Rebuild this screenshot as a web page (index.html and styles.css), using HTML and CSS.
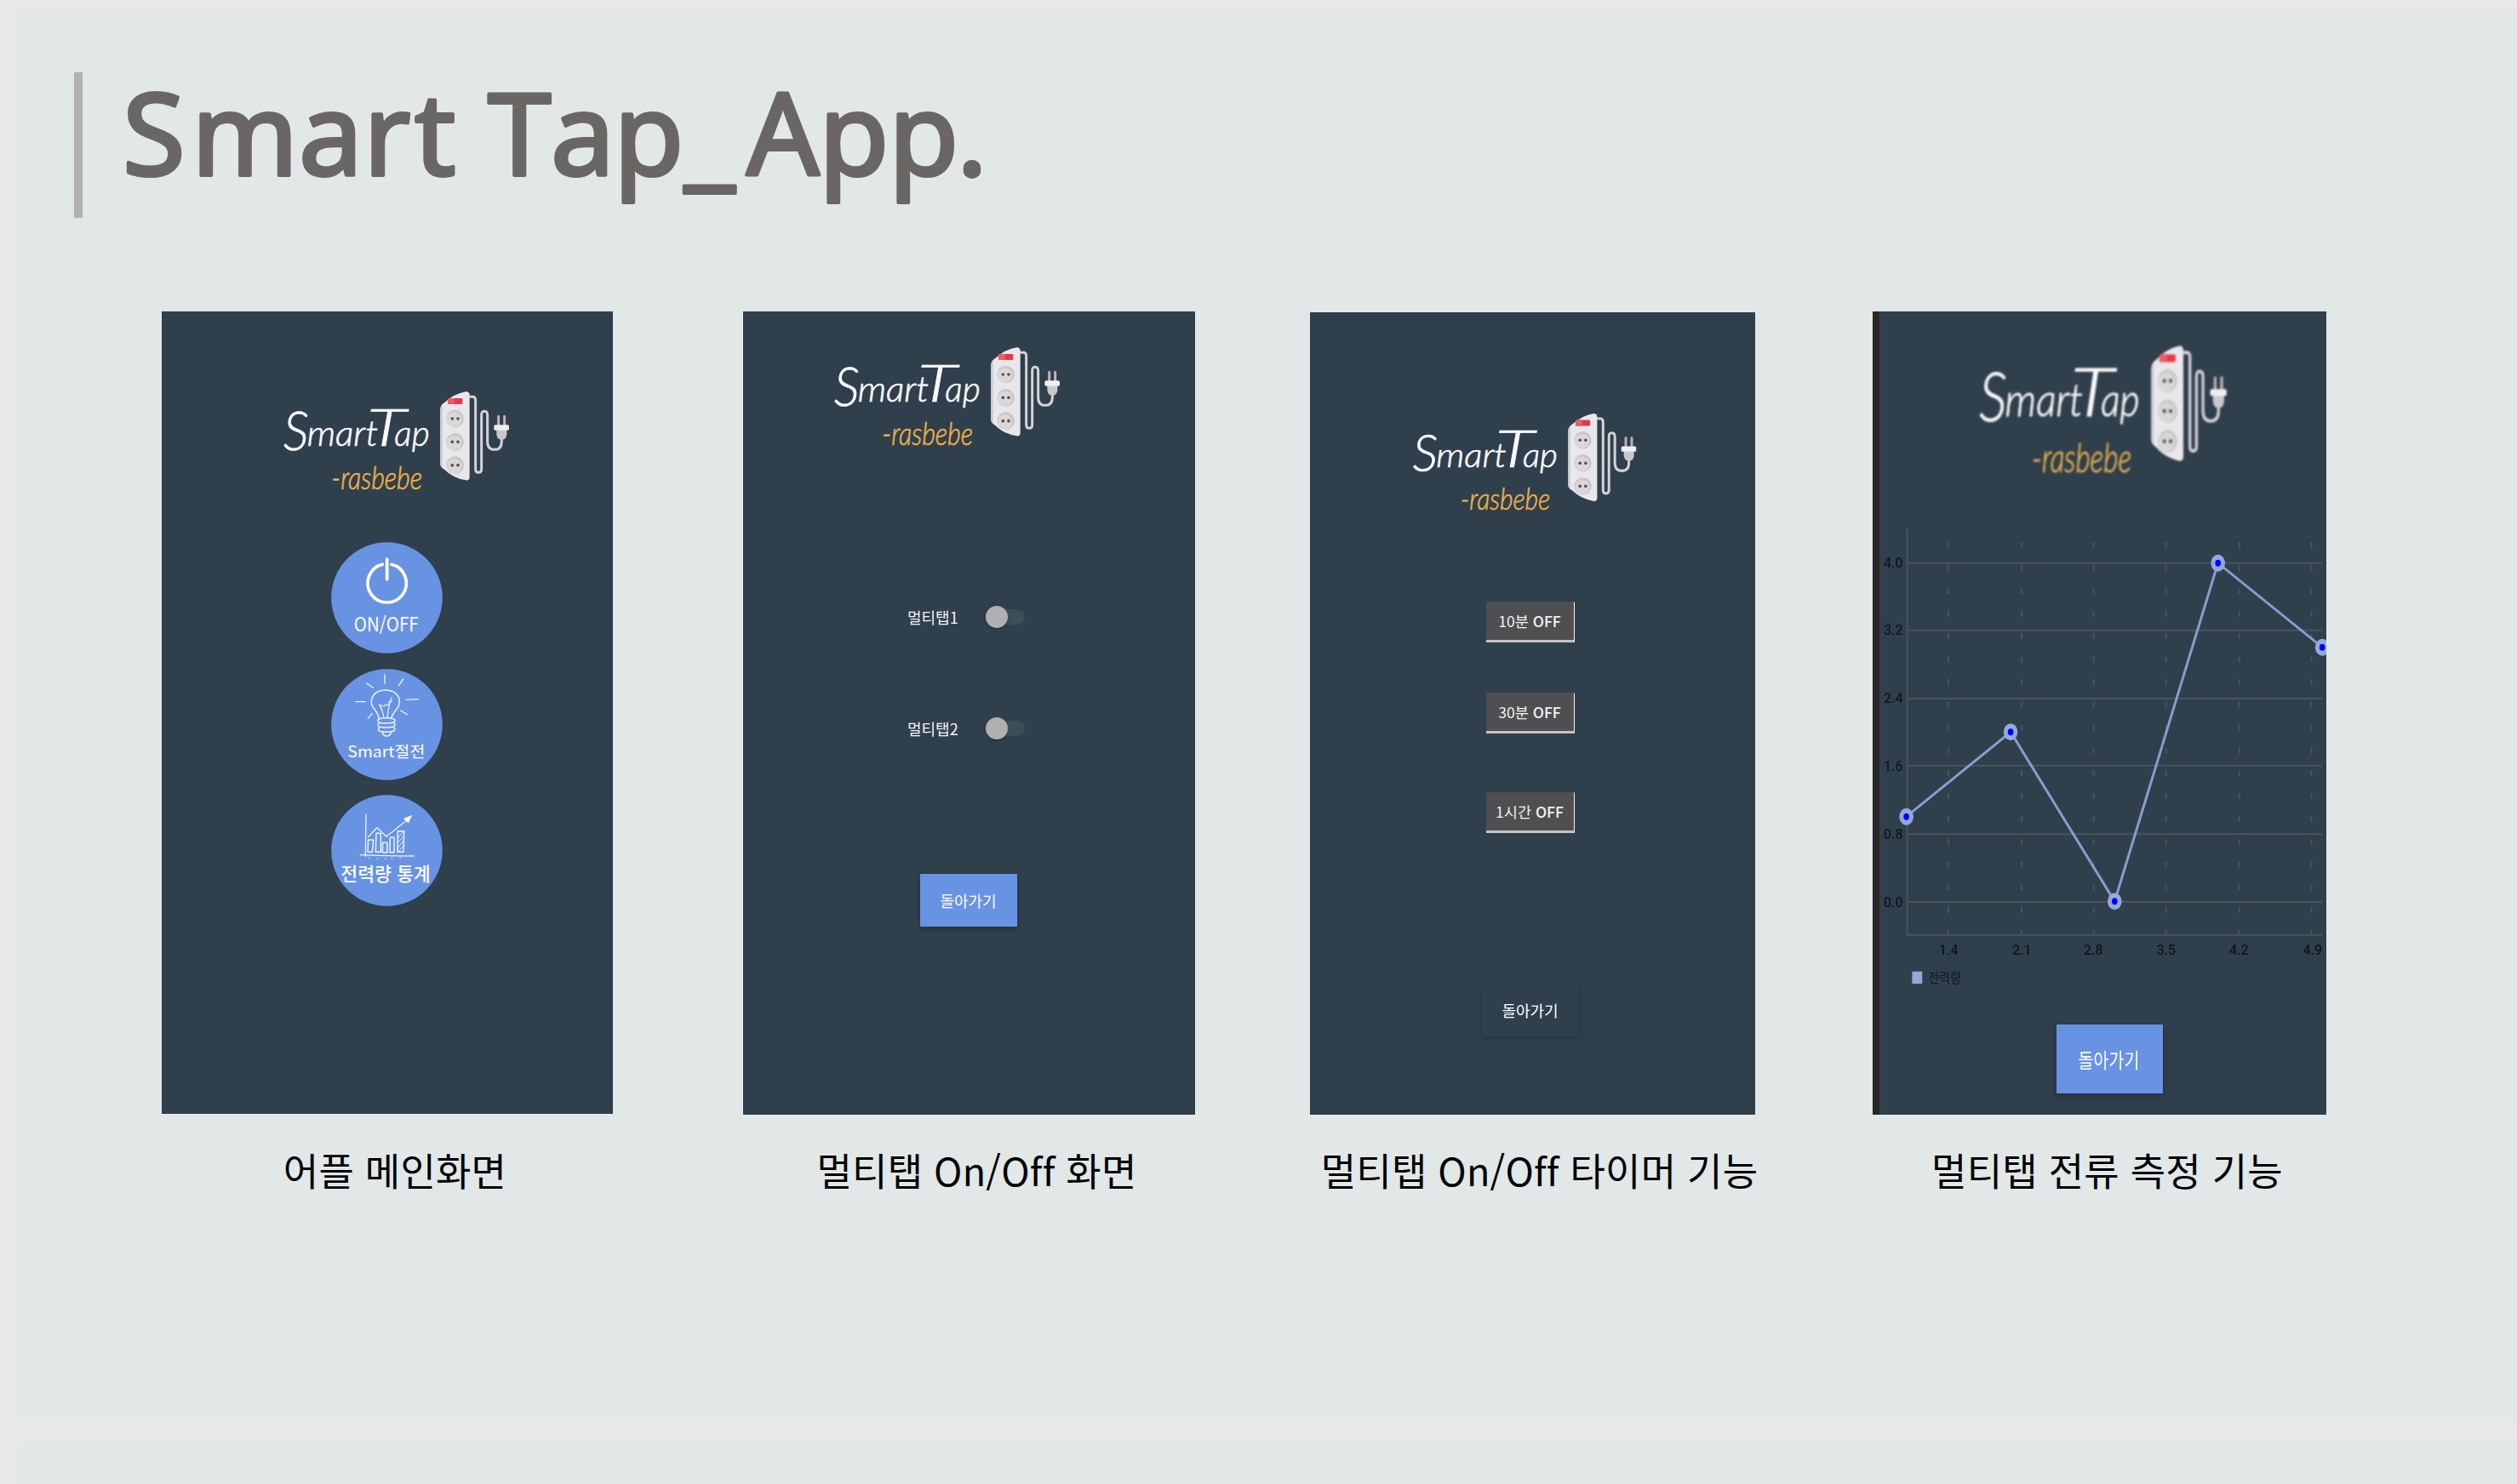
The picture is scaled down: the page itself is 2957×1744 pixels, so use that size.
FILE: index.html
```html
<!DOCTYPE html>
<html lang="ko">
<head>
<meta charset="utf-8">
<title>Smart Tap_App.</title>
<link rel="stylesheet" href="styles.css">
</head>
<body>
<svg class="defs" width="0" height="0" aria-hidden="true">
  <defs>
    <g id="socket">
      <circle r="31" fill="#c9c7ca"/>
      <circle cx="-3" cy="3" r="26" fill="#d9d7da"/>
      <circle cx="-10" r="5.5" fill="#5a5058"/>
      <circle cx="10" r="5.5" fill="#5a5058"/>
    </g>
    <symbol id="logo" viewBox="0 0 900 480">
      <text class="logo-name" y="251"><tspan x="38" y="266" font-size="188" textLength="90" lengthAdjust="spacingAndGlyphs">S</tspan><tspan x="122" y="251" font-size="122" textLength="250" lengthAdjust="spacingAndGlyphs">mart</tspan> <tspan x="333" y="251" font-size="184" textLength="138" lengthAdjust="spacingAndGlyphs">T</tspan><tspan x="430" y="251" font-size="122" textLength="124" lengthAdjust="spacingAndGlyphs">ap</tspan></text>
      <text class="logo-sub" x="208" y="404" textLength="320" lengthAdjust="spacingAndGlyphs">-rasbebe</text>
      <path d="M694 79H706Q716 79 716 92V334Q716 346 726 346Q737 346 737 334V144Q737 130 747 130Q758 130 758 144V236Q758 265 783 265Q808 265 808 236V222" fill="none" stroke="#d5d2d7" stroke-width="9"/>
      <path d="M592 120Q594 106 606 100Q640 68 682 61Q694 60 695 72V362Q694 375 682 373Q636 365 606 335Q593 328 592 318Z" fill="#e9e7ea"/>
      <path d="M592 120Q594 110 600 105V330Q593 326 592 318Z" fill="#d2cfd4"/>
      <rect x="618" y="84" width="52" height="21" rx="4" fill="#e23b49"/>
      <rect x="618" y="84" width="24" height="21" rx="4" fill="#ee5a65"/>
      <use href="#socket" x="644" y="156"/>
      <use href="#socket" x="644" y="238"/>
      <use href="#socket" x="644" y="320"/>
      <path d="M797 148V180M818 148V180" stroke="#bdb3ba" stroke-width="9" stroke-linecap="round"/>
      <path d="M790 194H826V212Q824 230 808 230Q792 230 790 212Z" fill="#cbc8cd"/>
      <rect x="781" y="178" width="53" height="19" rx="5" fill="#f0eef1"/>
    </symbol>
  </defs>
</svg>

<section class="slide">
  <header class="slide-head">
    <span class="bar"></span>
    <h1 class="title">
      <svg width="1040" height="171" viewBox="133 85 1040 171">
        <text y="206" x="144 225 351 427 487 540 573 647 721 804 877 962 1044 1124">Smart Tap_App.</text>
      </svg>
    </h1>
  </header>

  <div class="gallery">
    <figure class="shot shot-main">
      <div class="screen">
        <svg class="logo"><use href="#logo"/></svg>
        <nav class="menu">
          <svg class="round" viewBox="58 51 393 393">
            <circle cx="254.5" cy="247.5" r="196" fill="#6893e3"/>
            <path d="M239 130A68 68 0 1 0 271 130M255 111V182" fill="none" stroke="#fff" stroke-width="11" stroke-linecap="round"/>
            <text x="138" y="366" font-size="67" textLength="228" lengthAdjust="spacingAndGlyphs">ON/OFF</text>
          </svg>
          <svg class="round" viewBox="58 496 393 393">
            <circle cx="254.5" cy="692.5" r="196" fill="#6893e3"/>
            <g class="sketch">
              <path d="M247 517V547M312 532L296 555M184 547L206 563M145 612H179M366 603L322 605M203 653L188 671M303 643L326 657" stroke-width="4"/>
              <path d="M226 672C224 640 200 640 200 612C200 586 222 571 250 571C279 571 299 588 299 612C299 638 275 645 270 672" stroke-width="4.5"/>
              <path d="M244 670C242 652 236 638 228 622Q246 634 250 622Q262 632 271 598M256 670Q258 640 266 612M228 622L238 640M262 612H272" stroke-width="3.5"/>
              <path d="M226 673Q254 664 280 673Q288 680 278 685Q254 690 228 686Q218 680 226 673M228 687Q218 693 228 701Q254 706 278 700Q288 692 278 686M229 702Q220 710 229 716Q254 722 277 716Q287 709 278 701M238 718Q242 733 254 733Q266 733 270 718" stroke-width="4.5"/>
            </g>
            <text x="116" y="809" font-size="56" textLength="273" lengthAdjust="spacingAndGlyphs">Smart절전</text>
          </svg>
          <svg class="round" viewBox="58 942 393 393">
            <circle cx="254.5" cy="1138.5" r="196" fill="#6893e3"/>
            <g class="sketch">
              <path d="M181 1011L179 1159M161 1154Q250 1158 350 1158M188 1091L220 1058L253 1089L322 1034" stroke-width="4"/>
              <path d="M189 1101H207L203 1144H187ZM217 1078H233V1144H215ZM240 1111H256V1145H239ZM266 1093H280V1145H265ZM293 1070H315L313 1144H292Z" stroke-width="4.5"/>
              <path d="M295 1092L313 1072M294 1110L313 1088M294 1128L313 1104M296 1142L313 1122M193 1163v3M221 1166v3M250 1166v3M272 1164v3M301 1162v3" stroke-width="3"/>
              <path d="M344 1013L313 1026L330 1042Z" fill="#fff" stroke="none"/>
            </g>
            <text x="92" y="1245" font-size="65" font-weight="500" textLength="316" lengthAdjust="spacingAndGlyphs">전력량 통계</text>
          </svg>
        </nav>
      </div>
      <figcaption>어플 메인화면</figcaption>
    </figure>

    <figure class="shot shot-switch">
      <div class="screen">
        <svg class="logo"><use href="#logo"/></svg>
        <div class="switches">
          <label class="switch-row">멀티탭1<span class="switch"></span></label>
          <label class="switch-row">멀티탭2<span class="switch"></span></label>
        </div>
        <button class="back">돌아가기</button>
      </div>
      <figcaption>멀티탭 On/Off 화면</figcaption>
    </figure>

    <figure class="shot shot-timer">
      <div class="screen">
        <svg class="logo"><use href="#logo"/></svg>
        <div class="timers">
          <button class="timer">10분 <b>OFF</b></button>
          <button class="timer">30분 <b>OFF</b></button>
          <button class="timer last">1시간 <b>OFF</b></button>
        </div>
        <button class="back ghost">돌아가기</button>
      </div>
      <figcaption>멀티탭 On/Off 타이머 기능</figcaption>
    </figure>

    <figure class="shot shot-chart">
      <div class="screen">
        <svg class="logo" preserveAspectRatio="none" viewBox="0 0 900 480"><use href="#logo" width="900" height="480"/></svg>
        <svg class="chart" viewBox="0 240 533 570">
          <g class="grid">
            <path d="M40.7 255V732.7H528M40.7 295.7H528M40.7 374.7H528M40.7 455H528M40.7 533.7H528M40.7 614.3H528M40.7 694H528"/>
            <path class="dash" d="M89 271.3V732M175 271.3V732M259.6 271.3V732M344.6 271.3V732M430.7 271.3V732M515.4 271.3V732"/>
          </g>
          <g class="ticks">
            <text x="13" y="301">4.0</text><text x="13" y="380">3.2</text><text x="13" y="460">2.4</text>
            <text x="13" y="539.5">1.6</text><text x="13" y="619.5">0.8</text><text x="13" y="699.5">0.0</text>
            <text x="78" y="756">1.4</text><text x="164" y="756">2.1</text><text x="248" y="756">2.8</text>
            <text x="333.5" y="756">3.5</text><text x="419" y="756">4.2</text><text x="505.5" y="756">4.9</text>
          </g>
          <path d="M39.6 593.7L162.1 494.3L284.3 693.3L405.7 295.7L528.2 394.7" fill="none" stroke="#869dd0" stroke-width="3"/>
          <g fill="#93a9dc">
            <ellipse cx="39.6" cy="593.7" rx="8.3" ry="10"/><ellipse cx="162.1" cy="494.3" rx="8.3" ry="10"/><ellipse cx="284.3" cy="693.3" rx="8.3" ry="10"/><ellipse cx="405.7" cy="295.7" rx="8.3" ry="10"/><ellipse cx="528.2" cy="394.7" rx="8.3" ry="10"/>
            <rect x="46.4" y="775.7" width="11.8" height="14.3"/>
          </g>
          <g fill="#00f">
            <ellipse cx="39.6" cy="593.7" rx="3.3" ry="4"/><ellipse cx="162.1" cy="494.3" rx="3.3" ry="4"/><ellipse cx="284.3" cy="693.3" rx="3.3" ry="4"/><ellipse cx="405.7" cy="295.7" rx="3.3" ry="4"/><ellipse cx="528.2" cy="394.7" rx="3.3" ry="4"/>
          </g>
          <text class="legend" x="65.5" y="789" textLength="38.5" lengthAdjust="spacingAndGlyphs">전력량</text>
        </svg>
        <button class="back tall"><span>돌아가기</span></button>
      </div>
      <figcaption>멀티탭 전류 측정 기능</figcaption>
    </figure>
  </div>
</section>
<section class="slide next"></section>
</body>
</html>
```
FILE: styles.css
```css
* { box-sizing: border-box; }
body {
  margin: 0;
  height: 1744px;
  padding: 9px 0 0 22px;
  overflow: hidden;
  background: #e8e8e8;
  font-family: "Noto Sans CJK KR", "Noto Sans", sans-serif;
  display: flex;
  flex-direction: column;
  gap: 29px;
}
.defs { position: absolute; }
svg { display: block; }
.slide {
  flex: none;
  height: 1658px;
  padding-top: 76px;
  background: #e1e8e7;
}
.slide.next { height: 60px; }
.slide-head {
  display: flex;
  gap: 36px;
  height: 171px;
  padding-left: 65px;
}
.bar { width: 10px; background: #b3b0b0; }
.title { margin: 0; }
.title svg { overflow: visible; }
.title text {
  font: 400 134px "Noto Sans", sans-serif;
  fill: #6a6664;
  stroke: #6a6664;
  stroke-width: 4px;
  stroke-linejoin: round;
}

.gallery {
  display: flex;
  align-items: flex-start;
  margin-top: 110px;
  padding-left: 168px;
}
.shot { margin: 0; flex: none; }
.shot-main { width: 530px; }
.shot-switch { width: 531px; margin-left: 153px; }
.shot-timer { width: 523px; margin-left: 135px; padding-top: 1px; }
.shot-chart { width: 533px; margin-left: 138px; }
.screen {
  height: 944px;
  display: flex;
  flex-direction: column;
  align-items: center;
  overflow: hidden;
  background: #303f4c;
}
.shot-main .screen { height: 943px; margin-bottom: 1px; }
.shot-timer .screen { height: 943px; }
figcaption {
  display: flex;
  justify-content: center;
  margin-left: 18px;
  padding-top: 32px;
  font-size: 45px;
  line-height: 66px;
  letter-spacing: .2px;
  color: #000;
  white-space: pre;
}
.shot-timer figcaption { margin-left: 16px; }

.logo { width: 300px; height: 160px; align-self: flex-start; flex: none; }
.shot-main .logo { margin: 74px 0 0 130px; }
.shot-switch .logo { margin: 22px 0 0 94px; }
.shot-timer .logo { margin: 98px 0 0 108px; width: 297px; }
.shot-chart .logo { margin: 14px 0 0 111px; width: 329px; height: 208px; filter: blur(.8px); }
.logo-name, .logo-sub { font-family: Lato, sans-serif; font-weight: 300; font-style: italic; }
.logo-name { fill: #f7f9fa; stroke: #f7f9fa; stroke-width: 2px; }
.logo-sub { font-size: 110px; fill: #e9b04b; stroke: #e9b04b; stroke-width: 2px; }

.menu { display: flex; flex-direction: column; gap: 17.5px; margin: 37px 0 0 -1px; }
.round { width: 131px; height: 131px; }
.round text { fill: #fff; }
.sketch { fill: none; stroke: #eef3fd; stroke-linecap: round; stroke-linejoin: round; }

.switches { display: flex; flex-direction: column; gap: 99px; margin: 161px 0 0 -7px; }
.switch-row {
  display: flex;
  align-items: center;
  justify-content: space-between;
  width: 138px;
  height: 32px;
  font-size: 18px;
  color: #f2f4f5;
}
.switch {
  width: 46px;
  height: 18px;
  border-radius: 9px;
  background: #3e4e59;
  display: flex;
  align-items: center;
}
.switch::before {
  content: "";
  width: 26px;
  height: 26px;
  flex: none;
  border-radius: 50%;
  background: #b0b0b0;
  box-shadow: 0 1px 2px rgba(0, 0, 0, .35);
}

button { font-family: inherit; border: 0; padding: 0; color: #fff; }
.back {
  flex: none;
  width: 114px;
  height: 62px;
  background: #6893e3;
  font-size: 18px;
  box-shadow: 0 3px 5px rgba(20, 25, 35, .4);
}
.shot-switch .back { margin: 155px 0 0 -2px; padding-bottom: 1px; }

.timers { display: flex; flex-direction: column; margin: 82px 0 0 -6px; }
.timer {
  width: 104px;
  height: 48px;
  margin-bottom: 59px;
  background: #4f4f51;
  border-right: 1px solid #f2f2f2;
  border-bottom: 3px solid #c4c4c4;
  border-radius: 2px 2px 0 0;
  font-size: 17.5px;
  color: #f2f2f2;
}
.timer b { font-weight: 500; }
.timer:nth-child(2) { margin-bottom: 69px; }
.timer.last { margin-bottom: 0; }
.back.ghost {
  height: 60px;
  margin: 179px 0 0 -6px;
  padding-bottom: 2px;
  background: transparent;
  box-shadow: 0 2px 5px rgba(20, 25, 35, .3);
}

.shot-chart .screen { border-left: 8px solid #292827; }
.shot-chart .logo { margin-left: 103px; }
.chart { width: 533px; height: 570px; flex: none; margin: 18px 0 0 -8px; align-self: flex-start; filter: blur(.6px); }
.grid path { fill: none; stroke: #4b545a; stroke-width: 2px; }
.grid .dash { stroke-dasharray: 7 19.8; }
.ticks text { font: 500 16px Roboto, sans-serif; fill: #0e161d; }
.legend { font-size: 16px; fill: #0e161d; }
.back.tall {
  align-self: flex-start;
  width: 125px;
  height: 81px;
  margin: 28px 0 0 208px;
  filter: blur(.5px);
}
.back.tall span { display: inline-block; font-size: 19.5px; transform: translateX(-1px) scaleY(1.25); }
```
